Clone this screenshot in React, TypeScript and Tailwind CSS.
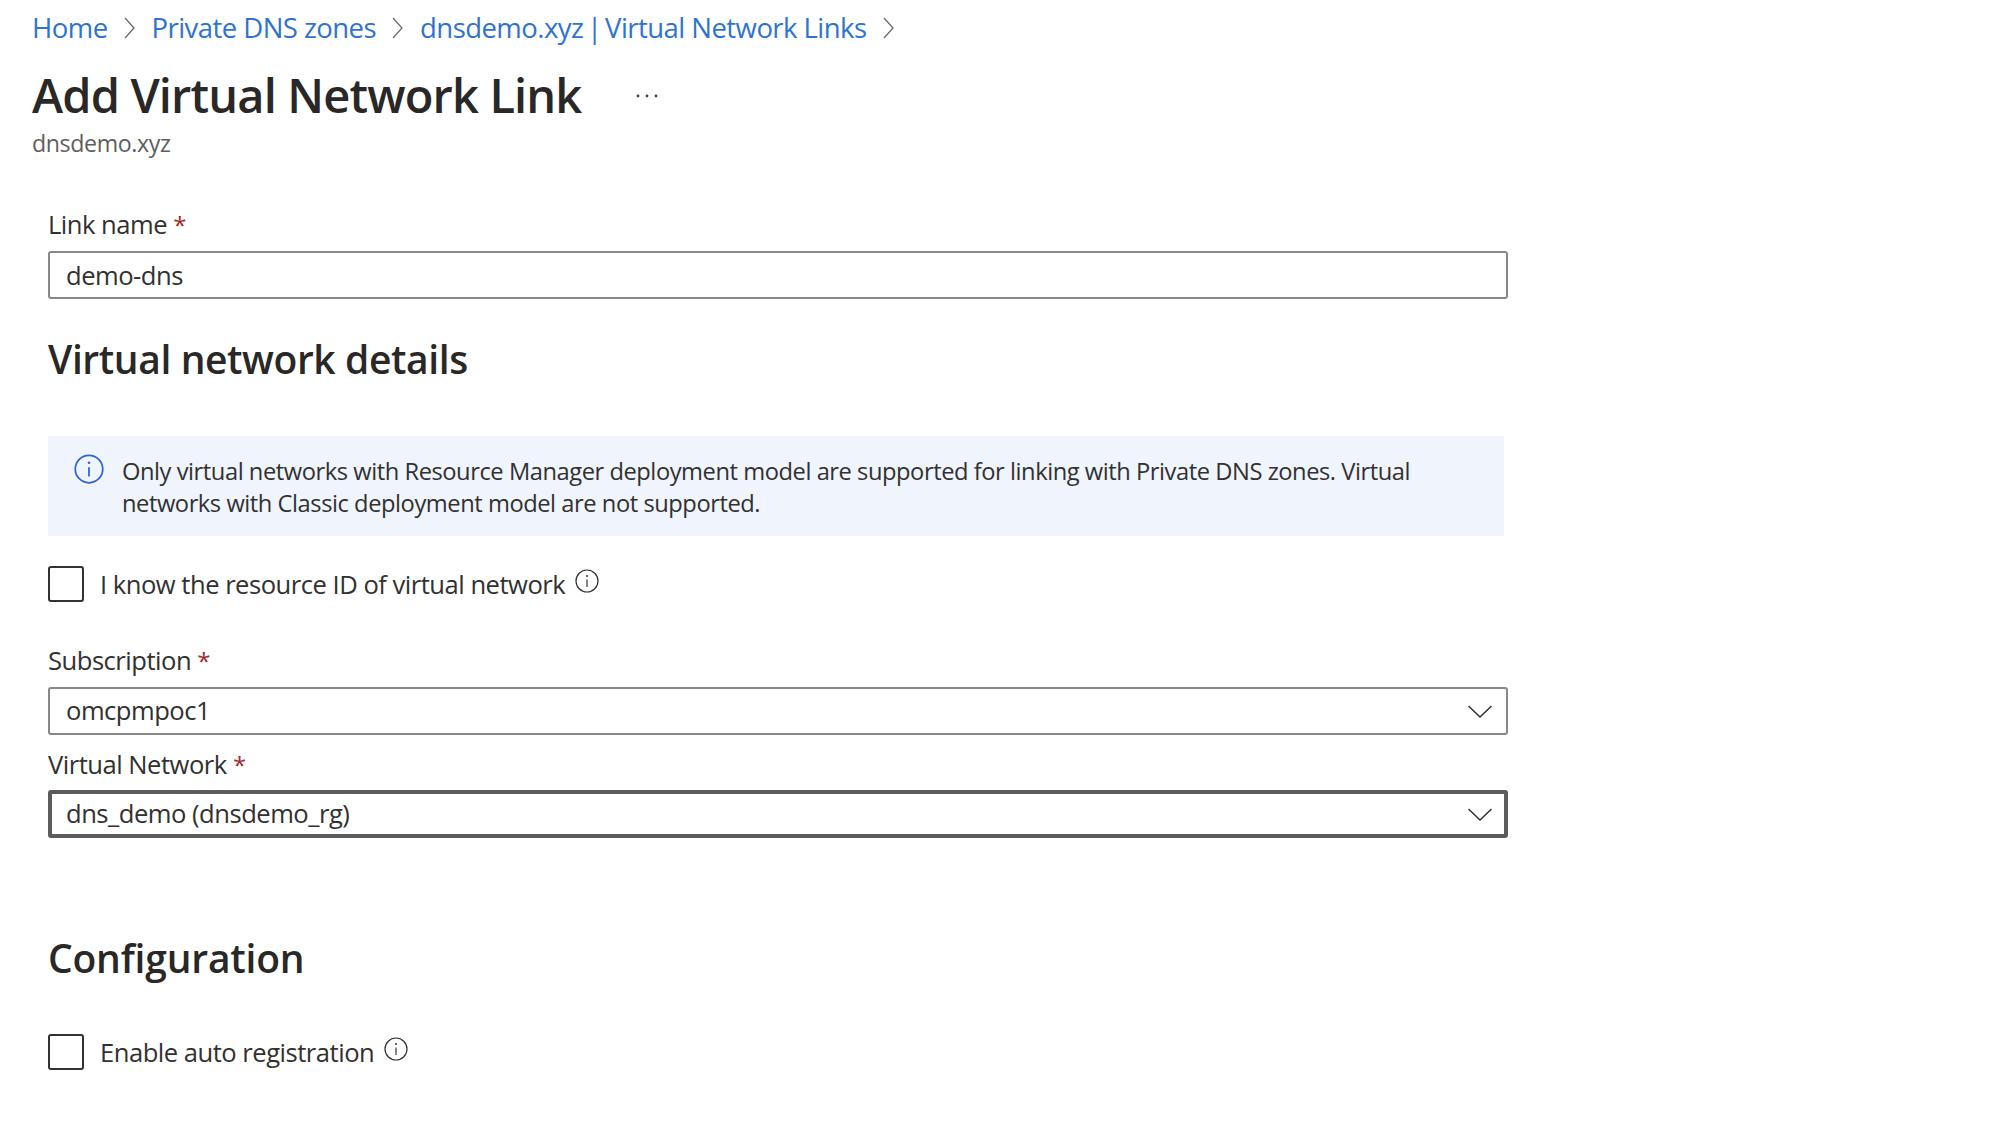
import React from "react";

const font = { fontFamily: '"Open Sans", "Noto Sans", sans-serif' };

function Chevron() {
  return (
    <svg width="14" height="26" viewBox="0 0 14 26" fill="none" className="shrink-0">
      <path d="M2 3 L11 13 L2 23" stroke="#6b6b6b" strokeWidth="1.3" />
    </svg>
  );
}

function Info({ size, color, stroke }: { size: number; color: string; stroke: number }) {
  return (
    <svg width={size} height={size} viewBox="0 0 24 24" fill="none" className="shrink-0">
      <circle cx="12" cy="12" r="11" stroke={color} strokeWidth={stroke} />
      <path d="M12 10.5 V18" stroke={color} strokeWidth={stroke} />
      <circle cx="12" cy="7" r="1" fill={color} />
    </svg>
  );
}

function Label({ text }: { text: string }) {
  return (
    <div className="text-[25.6px] leading-[32px] text-[#323130] tracking-[-0.5px]">
      {text} <span className="text-[24px] text-[#a4262c]">*</span>
    </div>
  );
}

function Select({ value, focused }: { value: string; focused?: boolean }) {
  return (
    <div
      className={
        "h-[48px] w-[1460px] rounded-[3px] flex items-center justify-between text-[25.6px] text-[#323130] tracking-[-0.5px] " +
        (focused ? "border-4 border-[#5c5c5c] pl-[14px] pr-[12px]" : "border-2 border-[#8a8886] pl-[16px] pr-[14px]")
      }
    >
      <span>{value}</span>
      <svg width="24" height="13" viewBox="0 0 24 13" fill="none">
        <path d="M0.5 1 L12 12 L23.5 1" stroke="#323130" strokeWidth="1.5" />
      </svg>
    </div>
  );
}

function Check({ label }: { label: string }) {
  return (
    <div className="flex items-center h-[36px]">
      <div className="w-[36px] h-[36px] rounded-[3px] border-2 border-[#323130]" />
      <span className="ml-[16px] mt-[2px] text-[25.6px] leading-[36px] text-[#323130] tracking-[-0.5px]">{label}</span>
      <span className="ml-[10px] -mt-[6px]">
        <Info size={24} color="#323130" stroke={1.2} />
      </span>
    </div>
  );
}

export default function App() {
  return (
    <div className="w-[2004px] h-[1144px] bg-white overflow-hidden" style={font}>
      {/* Breadcrumb */}
      <div className="pl-[32px] h-[56px] flex items-center gap-[15px] text-[27.5px] leading-[36px] text-[#2f73d0] tracking-[-0.55px]">
        <span>Home</span>
        <Chevron />
        <span>Private DNS zones</span>
        <Chevron />
        <span>
          dnsdemo.xyz <span className="-mx-[3px]">|</span> Virtual Network Links
        </span>
        <Chevron />
      </div>

      {/* Title */}
      <div className="mt-[9px] pl-[32px] h-[60px] flex items-center">
        <h1 className="text-[47px] leading-[60px] font-semibold text-[#292827] tracking-[-0.85px]">
          Add Virtual Network Link
        </h1>
        <svg width="22" height="6" viewBox="0 0 22 6" className="ml-[55px] mt-[2px]">
          <circle cx="2" cy="3" r="1.4" fill="#444" />
          <circle cx="11" cy="3" r="1.4" fill="#444" />
          <circle cx="20" cy="3" r="1.4" fill="#444" />
        </svg>
      </div>
      <div className="mt-[3px] pl-[32px] text-[23.2px] leading-[30px] text-[#605e5c] tracking-[-0.4px]">dnsdemo.xyz</div>

      {/* Form */}
      <div className="pl-[48px] pt-[51px]">
        <Label text="Link name" />
        <div className="mt-[10px] h-[48px] w-[1460px] rounded-[3px] border-2 border-[#8a8886] pl-[16px] flex items-center text-[25.6px] text-[#323130] tracking-[-0.5px]">
          <span className="mt-[2px]">demo-dns</span>
        </div>

        <h2 className="mt-[37px] text-[39px] leading-[46px] font-semibold text-[#292827] tracking-[-0.4px]">
          Virtual network details
        </h2>

        <div className="mt-[54px] w-[1456px] h-[100px] bg-[#eff4fd] flex pl-[26px] pt-[18px]">
          <Info size={30} color="#2b63d9" stroke={1.4} />
          <p className="ml-[18px] mt-[1px] text-[23.7px] leading-[32px] text-[#323130] tracking-[-0.45px] w-[1340px]">
            Only virtual networks with Resource Manager deployment model are supported for linking with Private DNS
            zones. Virtual networks with Classic deployment model are not supported.
          </p>
        </div>

        <div className="mt-[30px]">
          <Check label="I know the resource ID of virtual network" />
        </div>

        <div className="mt-[43px]">
          <Label text="Subscription" />
        </div>
        <div className="mt-[10px]">
          <Select value="omcpmpoc1" />
        </div>
        <div className="mt-[14px]">
          <Label text="Virtual Network" />
        </div>
        <div className="mt-[9px]">
          <Select value="dns_demo (dnsdemo_rg)" focused />
        </div>

        <h2 className="mt-[97px] text-[39px] leading-[46px] font-semibold text-[#292827] tracking-[-0.2px]">
          Configuration
        </h2>

        <div className="mt-[53px]">
          <Check label="Enable auto registration" />
        </div>
      </div>
    </div>
  );
}
